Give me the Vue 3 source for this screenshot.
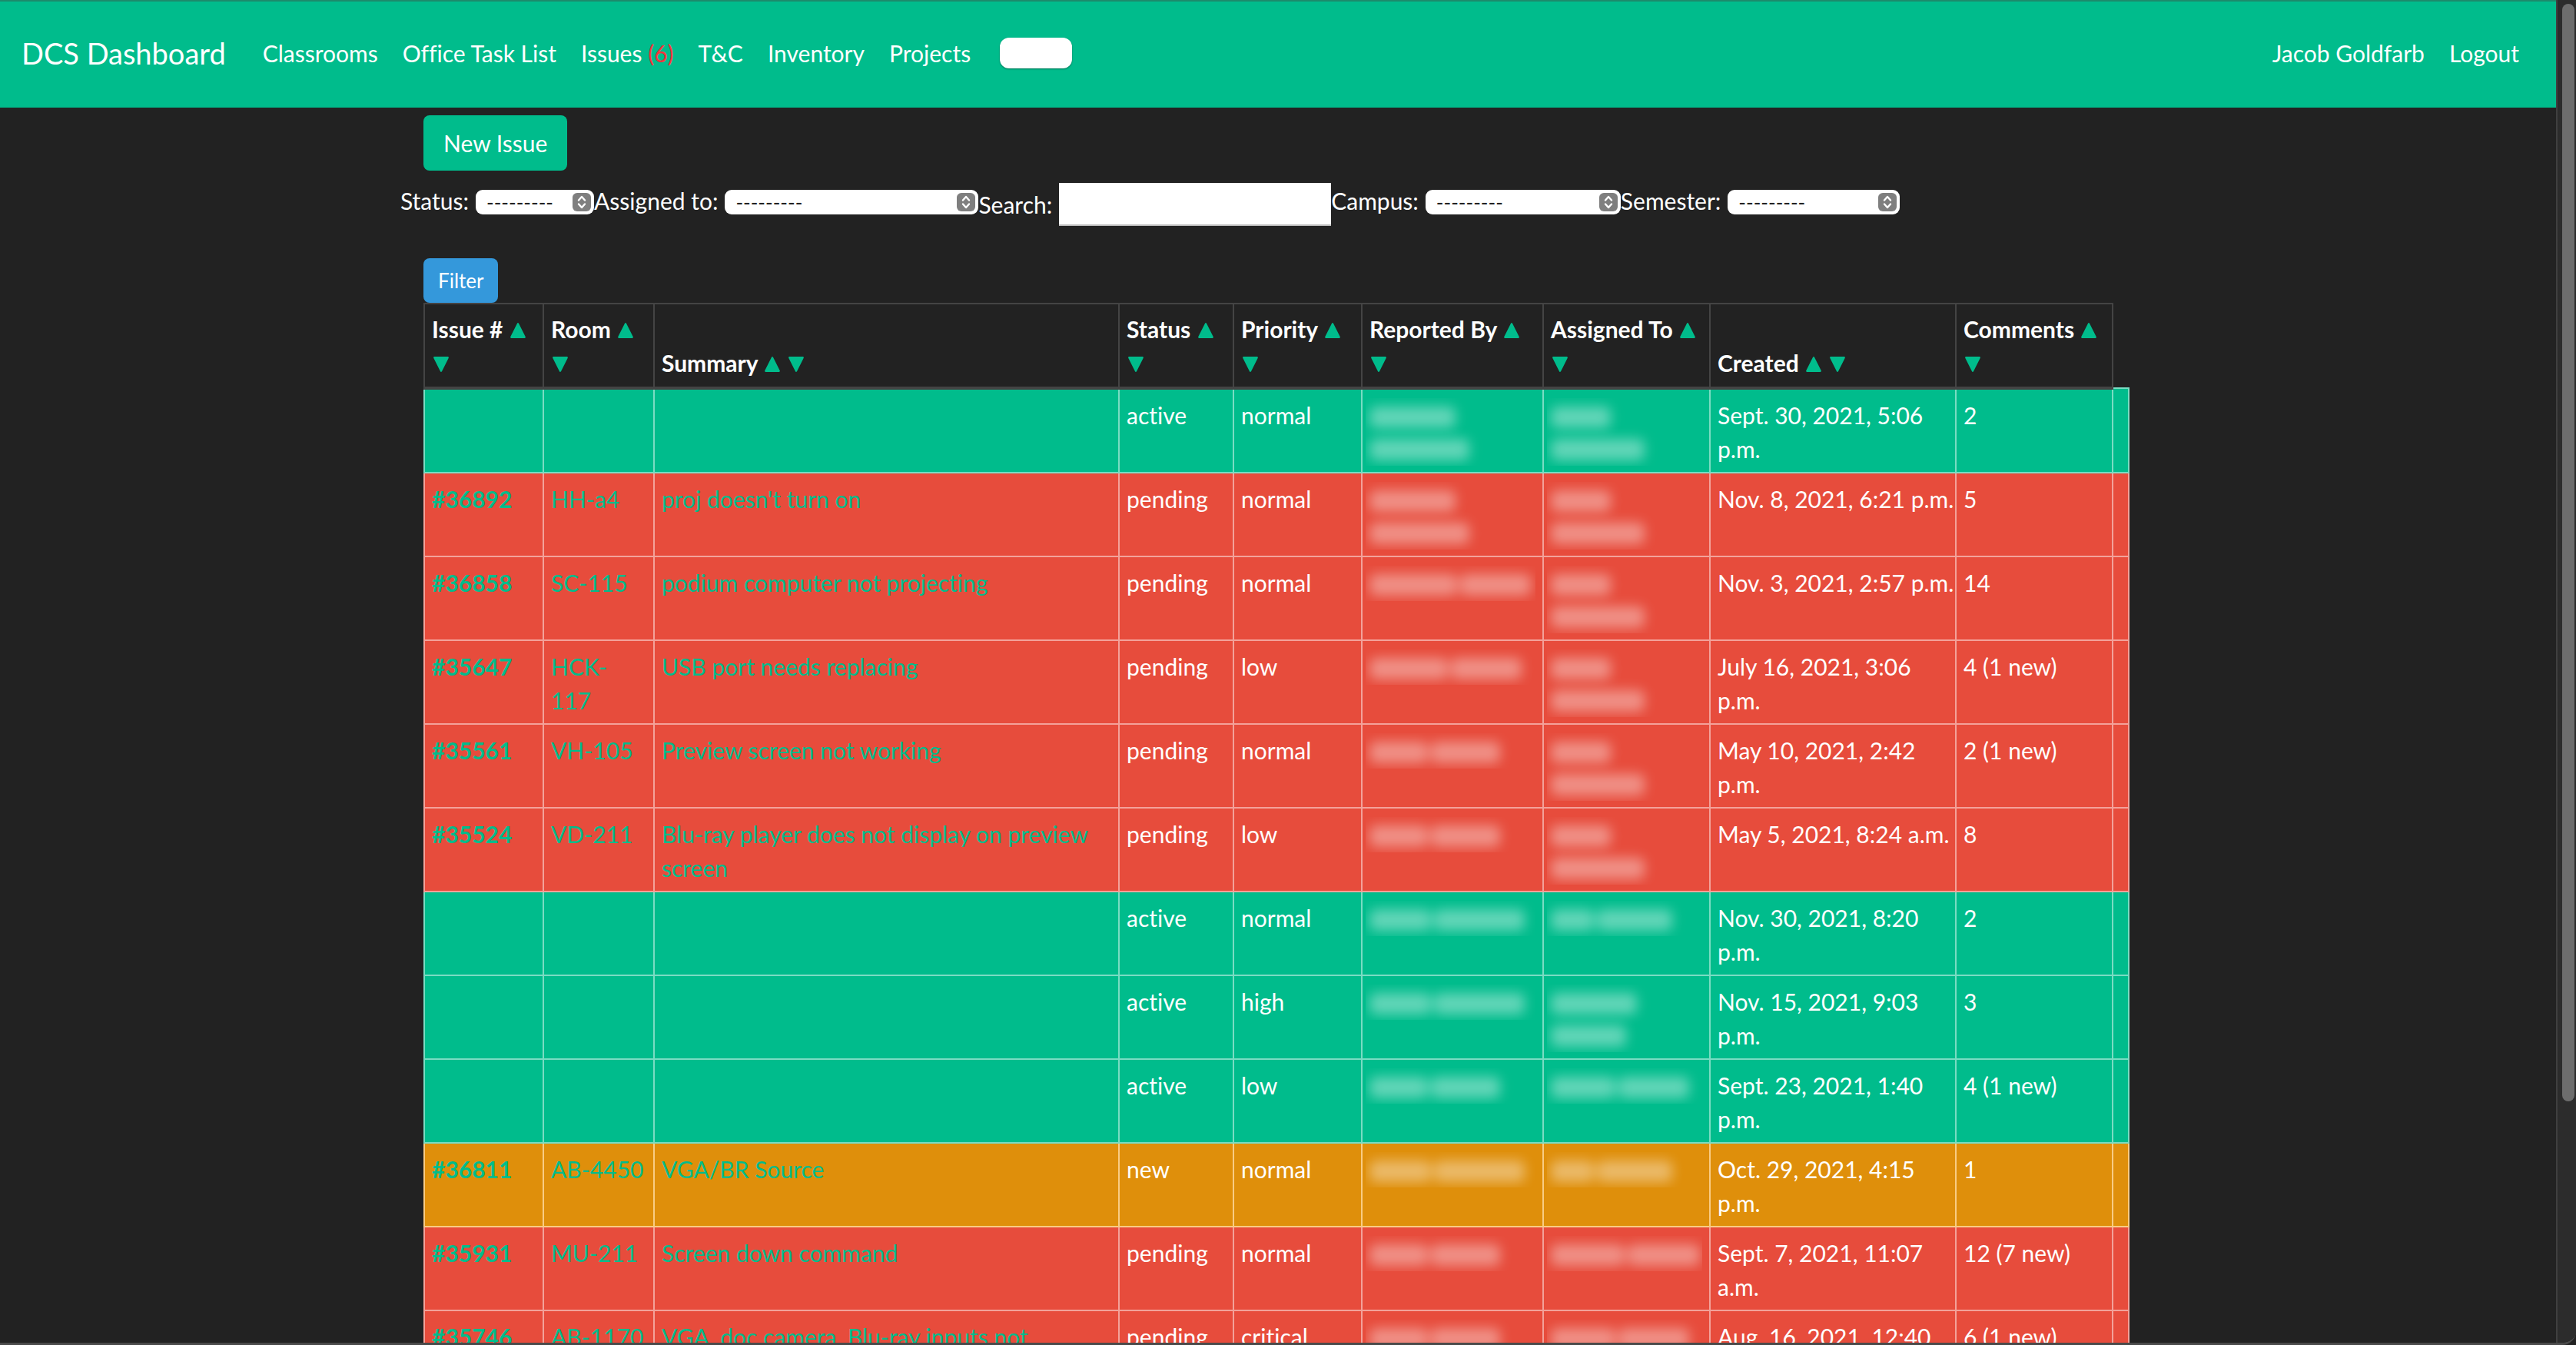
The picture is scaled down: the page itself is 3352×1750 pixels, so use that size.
<script setup>
const navLinks = ['Classrooms', 'Office Task List', 'Issues', 'T&C', 'Inventory', 'Projects']

const columns = [
  { label: 'Issue #', cls: 'c-id' },
  { label: 'Room', cls: 'c-room' },
  { label: 'Summary', cls: 'c-summary' },
  { label: 'Status', cls: 'c-status' },
  { label: 'Priority', cls: 'c-priority' },
  { label: 'Reported By', cls: 'c-reporter' },
  { label: 'Assigned To', cls: 'c-assignee' },
  { label: 'Created', cls: 'c-created' },
  { label: 'Comments', cls: 'c-comments' },
]

// Hidden names: one array per line, one width per word
const n = {
  a: [[112], [130]],
  b: [[114, 92]],
  c: [[102, 92]],
  d: [[76, 90]],
  e: [[80, 118]],
  jg: [[78], [122]],
  jn: [[56, 98]],
  er: [[112], [98]],
  ss: [[84, 92]],
  dm: [[96, 94]],
}

const rows = [
  { kind: 'active', id: '', room: '', summary: '', priority: 'normal', by: n.a, to: n.jg, created: 'Sept. 30, 2021, 5:06 p.m.', comments: '2' },
  { kind: 'pending', id: '#36892', room: 'HH-a4', summary: "proj doesn't turn on", priority: 'normal', by: n.a, to: n.jg, created: 'Nov. 8, 2021, 6:21 p.m.', comments: '5' },
  { kind: 'pending', id: '#36858', room: 'SC-115', summary: 'podium computer not projecting', priority: 'normal', by: n.b, to: n.jg, created: 'Nov. 3, 2021, 2:57 p.m.', comments: '14' },
  { kind: 'pending', id: '#35647', room: 'HCK-117', summary: 'USB port needs replacing', priority: 'low', by: n.c, to: n.jg, created: 'July 16, 2021, 3:06 p.m.', comments: '4 (1 new)' },
  { kind: 'pending', id: '#35561', room: 'VH-105', summary: 'Preview screen not working', priority: 'normal', by: n.d, to: n.jg, created: 'May 10, 2021, 2:42 p.m.', comments: '2 (1 new)' },
  { kind: 'pending', id: '#35524', room: 'VD-211', summary: 'Blu-ray player does not display on preview screen', priority: 'low', by: n.d, to: n.jg, created: 'May 5, 2021, 8:24 a.m.', comments: '8' },
  { kind: 'active', id: '', room: '', summary: '', priority: 'normal', by: n.e, to: n.jn, created: 'Nov. 30, 2021, 8:20 p.m.', comments: '2' },
  { kind: 'active', id: '', room: '', summary: '', priority: 'high', by: n.e, to: n.er, created: 'Nov. 15, 2021, 9:03 p.m.', comments: '3' },
  { kind: 'active', id: '', room: '', summary: '', priority: 'low', by: n.d, to: n.ss, created: 'Sept. 23, 2021, 1:40 p.m.', comments: '4 (1 new)' },
  { kind: 'new', id: '#36811', room: 'AB-4450', summary: 'VGA/BR Source', priority: 'normal', by: n.e, to: n.jn, created: 'Oct. 29, 2021, 4:15 p.m.', comments: '1' },
  { kind: 'pending', id: '#35931', room: 'MU-211', summary: 'Screen down command', priority: 'normal', by: n.d, to: n.dm, created: 'Sept. 7, 2021, 11:07 a.m.', comments: '12 (7 new)' },
  { kind: 'pending', id: '#35746', room: 'AB-1170', summary: 'VGA, doc camera, Blu-ray inputs not', priority: 'critical', by: n.d, to: n.ss, created: 'Aug. 16, 2021, 12:40 p.m.', comments: '6 (1 new)' },
]

// The shortest dates stay on one line
const isShort = (date) => date.length <= 23 && !/ \d\d,/.test(date)

const filters = [
  { id: 'status', label: 'Status:', type: 'select' },
  { id: 'assigned', label: 'Assigned to:', type: 'select' },
  { id: 'search', label: 'Search:', type: 'text' },
  { id: 'campus', label: 'Campus:', type: 'select' },
  { id: 'semester', label: 'Semester:', type: 'select' },
]
</script>

<template>
  <div class="window">
    <div class="page">
      <header class="navbar">
        <a class="brand" href="#">DCS Dashboard</a>
        <nav class="links">
          <a v-for="l in navLinks" :key="l" href="#">{{ l }}<span v-if="l === 'Issues'" class="count"> (6)</span></a>
          <button class="blank" type="button" aria-label="Menu"></button>
        </nav>
        <nav class="links user">
          <a href="#">Jacob Goldfarb</a>
          <a href="#">Logout</a>
        </nav>
      </header>

      <main class="container">
        <button class="btn new-issue" type="button">New Issue</button>

        <form @submit.prevent>
          <div class="filters">
            <div v-for="f in filters" :key="f.id" class="field" :class="f.type">
              <label :for="f.id">{{ f.label }}</label>
              <input v-if="f.type === 'text'" :id="f.id" type="text" />
              <span v-else class="picker" :class="f.id">
                <select :id="f.id"><option>---------</option></select>
                <svg viewBox="0 0 24 24" aria-hidden="true">
                  <rect width="24" height="24" rx="6" fill="#7f7f7f" />
                  <path d="M8 9.5l4-4.5 4 4.5M8 14.5l4 4.5 4-4.5" fill="none" stroke="#fff" stroke-width="2.4" stroke-linecap="round" stroke-linejoin="round" />
                </svg>
              </span>
            </div>
          </div>
          <button class="btn filter" type="submit">Filter</button>
        </form>

        <table>
          <colgroup>
            <col v-for="c in columns" :key="c.label" :class="c.cls" />
            <col class="c-end" />
          </colgroup>
          <thead>
            <tr>
              <th v-for="c in columns" :key="c.label" scope="col">
                {{ c.label }}
                <a href="#" :aria-label="'Sort ascending by ' + c.label"><svg class="tri" viewBox="0 0 20 20"><path d="M10 2L18 18H2Z" /></svg></a>
                {{ ' ' }}
                <a href="#" :aria-label="'Sort descending by ' + c.label"><svg class="tri" viewBox="0 0 20 20"><path d="M10 18L18 2H2Z" /></svg></a>
              </th>
            </tr>
          </thead>
          <tbody>
            <tr v-for="(r, i) in rows" :key="i" :class="r.kind">
              <td><a class="id" href="#">{{ r.id }}</a></td>
              <td><a href="#">{{ r.room }}</a></td>
              <td><a href="#">{{ r.summary }}</a></td>
              <td>{{ r.kind }}</td>
              <td>{{ r.priority }}</td>
              <td v-for="(name, k) in [r.by, r.to]" :key="k">
                <div class="hidden-name">
                  <div v-for="(line, j) in name" :key="j" class="line">
                    <i v-for="(w, m) in line" :key="m" :style="{ width: w + 'px' }"></i>
                  </div>
                </div>
              </td>
              <td class="date" :class="{ short: isShort(r.created) }">{{ r.created }}</td>
              <td>{{ r.comments }}</td>
              <td class="end"></td>
            </tr>
          </tbody>
        </table>
      </main>
    </div>
    <div class="scrollbar"><div class="thumb"></div></div>
  </div>
</template>

<style>
html,
body {
  background: #222;
  overflow: hidden;
}
</style>

<style scoped>
* {
  box-sizing: border-box;
}

.window {
  display: flex;
  height: 100vh;
  overflow: hidden;
  background: #222;
  border-bottom: 3px solid #4a4a4a;
  border-bottom-right-radius: 18px;
  color: #fff;
  font-family: Lato, "Liberation Sans", sans-serif;
  font-size: 30px;
  font-variant-ligatures: none;
  line-height: 44px;
}

.page {
  flex: 1;
  min-width: 0;
  overflow: hidden;
}

a {
  color: #00bc8c;
  text-decoration: none;
}

.navbar {
  display: flex;
  align-items: center;
  height: 140px;
  padding: 0 32px 4px 28px;
  background: #00bc8c;
  border-top: 2px solid #1d8a6b;
}

.navbar a {
  color: #fff;
}

.brand {
  margin-right: 32px;
  font-size: 38px;
}

.links {
  display: flex;
  align-items: center;
}

.links a {
  padding: 0 16px;
}

.links .count {
  color: #f9323b;
  white-space: pre;
}

.user {
  margin-left: auto;
}

.blank {
  width: 94px;
  height: 40px;
  margin-left: 22px;
  border: 0;
  border-radius: 12px;
  background: #fff;
  box-shadow: 0 1px 2px rgba(0, 0, 0, 0.4);
}

.container {
  width: 100%;
  max-width: 2284px;
  margin: 0 auto;
  padding: 10px 34px 0 30px;
}

.btn {
  display: block;
  border: 0;
  border-radius: 8px;
  color: #fff;
  font-family: inherit;
}

.new-issue {
  height: 72px;
  padding: 0 26px;
  background: #00bc8c;
  font-size: 30px;
}

.filter {
  height: 58px;
  padding: 0 19px;
  background: #3498db;
  font-size: 26px;
}

.filters {
  display: flex;
  align-items: flex-start;
  height: 98px;
  margin: 16px -30px 0;
}

.field {
  display: flex;
  align-items: center;
  min-height: 50px;
}

.field label {
  margin-right: 9px;
}

.field.select label {
  padding-bottom: 4px;
}

.field input {
  width: 354px;
  height: 56px;
  border: 0;
  border-bottom: 2px solid #bbb;
  background: #fff;
  font-size: 26px;
}

.picker {
  position: relative;
  display: flex;
}

.picker select {
  width: 100%;
  height: 32px;
  padding: 0 14px;
  appearance: none;
  border: 0;
  border-radius: 9px;
  background: #fff;
  color: #222;
  font-family: Lato, sans-serif;
  font-size: 26px;
}

.picker svg {
  position: absolute;
  top: 4px;
  right: 4px;
  width: 24px;
  height: 24px;
  pointer-events: none;
}

.picker.status { width: 154px; }
.picker.assigned { width: 330px; }
.picker.campus { width: 254px; }
.picker.semester { width: 224px; }

table {
  width: 100%;
  table-layout: fixed;
  border-collapse: collapse;
}

.c-id { width: 155px; }
.c-room { width: 144px; }
.c-status { width: 149px; }
.c-priority { width: 167px; }
.c-reporter { width: 236px; }
.c-assignee { width: 217px; }
.c-created { width: 320px; }
.c-comments { width: 204px; }
.c-end { width: 21px; }

th,
td {
  padding: 10px 9px 9px;
  text-align: left;
}

th {
  border: 2px solid #444;
  border-bottom-width: 4px;
  vertical-align: bottom;
  font-weight: 700;
}

td {
  padding: 11px 9px 8px;
  border: 2px solid;
  vertical-align: top;
}

td.date {
  padding-right: 2px;
}

td.short {
  white-space: nowrap;
}

td.end {
  padding: 0;
}

.tri {
  width: 24px;
  height: 22px;
  vertical-align: -1px;
  fill: #00bc8c;
  stroke: #00bc8c;
  stroke-width: 2;
  stroke-linejoin: round;
}

.id {
  font-weight: 700;
}

.active td {
  background: #00bc8c;
  border-color: #7adcc3;
}

.pending td {
  background: #e74c3c;
  border-color: #f3a29a;
}

.new td {
  background: #df8f0b;
  border-color: #f9cc84;
}

.hidden-name {
  margin-left: -5px;
  padding-top: 4px;
  overflow: hidden;
}

.line {
  display: flex;
  align-items: center;
  gap: 4px;
  height: 42px;
  padding-left: 5px;
  filter: blur(8px);
}

.line i {
  height: 28px;
  border-radius: 8px;
  background: rgba(255, 255, 255, 0.38);
}

.scrollbar {
  width: 26px;
  padding: 5px 2px 0 6px;
  border-left: 2px solid #3f3f3f;
  background: #2c2c2c;
}

.thumb {
  height: 82%;
  border-radius: 8px;
  background: #6d6d6d;
}
</style>
